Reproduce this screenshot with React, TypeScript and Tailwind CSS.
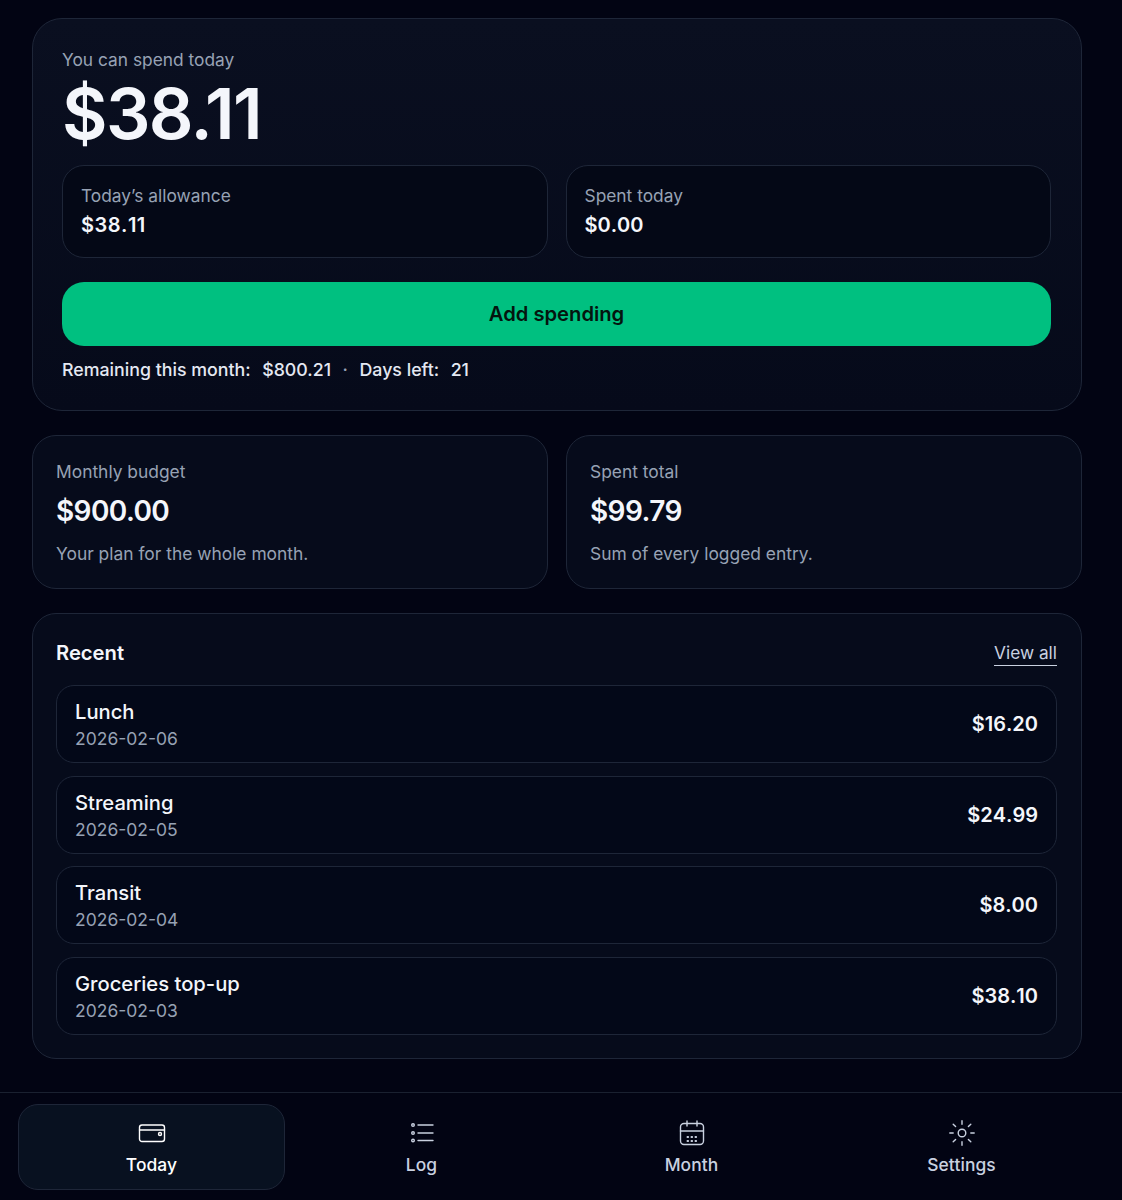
const FONT = "font-['Inter','Liberation_Sans',sans-serif]";

const RECENT = [
  { name: 'Lunch', date: '2026-02-06', amount: '$16.20' },
  { name: 'Streaming', date: '2026-02-05', amount: '$24.99' },
  { name: 'Transit', date: '2026-02-04', amount: '$8.00' },
  { name: 'Groceries top-up', date: '2026-02-03', amount: '$38.10' },
];

function WalletIcon() {
  return (
    <svg width="28" height="28" viewBox="0 0 28 28" fill="none" stroke="currentColor" strokeWidth="1.4" strokeLinecap="round" strokeLinejoin="round">
      <rect x="1.5" y="6" width="25" height="16.5" rx="2.5" />
      <path d="M1.5 11h25" />
      <circle cx="22" cy="15" r="1.5" />
    </svg>
  );
}

function ListIcon() {
  return (
    <svg width="28" height="28" viewBox="0 0 28 28" fill="none" stroke="currentColor" strokeWidth="1.4" strokeLinecap="round">
      <path d="M10 6h15M10 14h15M10 21.5h15" />
      <circle cx="5" cy="6" r="1.3" />
      <circle cx="5" cy="14" r="1.3" />
      <circle cx="5" cy="21.5" r="1.3" />
    </svg>
  );
}

function CalendarIcon() {
  return (
    <svg width="28" height="28" viewBox="0 0 28 28" fill="none" stroke="currentColor" strokeWidth="1.4" strokeLinecap="round">
      <rect x="2.5" y="4.5" width="23" height="21" rx="3.5" />
      <path d="M2.5 12h23M9 2v5M19 2v5" />
      <path d="M9.5 18h.6M13.5 18h.6M17.5 18h.6M9.5 22h.6M13.5 22h.6M17.5 22h.6" strokeWidth="2" />
    </svg>
  );
}

function SunIcon() {
  return (
    <svg width="28" height="28" viewBox="0 0 28 28" fill="none" stroke="currentColor" strokeWidth="1.4" strokeLinecap="round">
      <circle cx="14" cy="14" r="3.8" />
      <path d="M14 1.8v3.4M14 22.8v3.4M1.8 14h3.4M22.8 14h3.4M5.2 5.2l2.4 2.4M20.4 20.4l2.4 2.4M5.2 22.8l2.4-2.4M20.4 7.6l2.4-2.4" />
    </svg>
  );
}

function NavItem({ label, icon, active }: { label: string; icon: React.ReactNode; active?: boolean }) {
  return (
    <div
      className={`flex h-[86px] flex-col items-center justify-center gap-[6px] rounded-[20px] border pt-[2px] text-[17.4px] font-medium tracking-[0.1px] ${
        active ? 'border-[#1e2638] bg-[#081120] text-white' : 'border-transparent text-[#c9d1e0]'
      }`}
    >
      {icon}
      <span className="leading-[24px]">{label}</span>
    </div>
  );
}

export default function App() {
  return (
    <div className={`${FONT} flex h-[1200px] flex-col overflow-hidden bg-[#020413] text-white`}>
      <main className="flex flex-col gap-[24px] pl-[32px] pr-[40px] pt-[18px]">
        {/* Hero */}
        <section className="h-[393px] rounded-[30px] border border-[#1e2638] bg-gradient-to-b from-[#0a0f20] to-[#060a1a] pl-[29px] pr-[30px] pt-[28px]">
          <div className="text-[17.35px] leading-[26px] text-[#97a2b4]">You can spend today</div>
          <div className="mt-[3px] text-[70px] font-semibold leading-[76px] tracking-[-1.6px] text-[#f4f6fb]">$38.11</div>
          <div className="mt-[13px] grid grid-cols-2 gap-[18px]">
            <div className="h-[93px] rounded-[22px] border border-[#1e2638] bg-[#040816] px-[18px] pt-[17px]">
              <div className="text-[17.35px] leading-[26px] text-[#97a2b4]">Today’s allowance</div>
              <div className="mt-[2px] text-[20px] font-semibold leading-[28px] tracking-[0.5px] text-[#f4f6fb] [font-kerning:none]">$38.11</div>
            </div>
            <div className="h-[93px] rounded-[22px] border border-[#1e2638] bg-[#040816] px-[18px] pt-[17px]">
              <div className="text-[17.35px] leading-[26px] text-[#97a2b4]">Spent today</div>
              <div className="mt-[2px] text-[20px] font-semibold leading-[28px] text-[#f4f6fb] [font-kerning:none]">$0.00</div>
            </div>
          </div>
          <div className="mt-[24px] flex h-[64px] items-center justify-center rounded-[22px] bg-[#00c080] text-[20.2px] font-semibold text-[#04150f]">
            Add spending
          </div>
          <div className="mt-[11px] flex items-center text-[17.8px] font-medium leading-[26px] text-[#e4e8f2]">
            <span>Remaining this month:</span>
            <span className="ml-[11.5px]">$800.21</span>
            <span className="ml-[11.5px] text-[#97a2b4]">·</span>
            <span className="ml-[11.5px]">Days left:</span>
            <span className="ml-[11.5px]">21</span>
          </div>
        </section>

        {/* Totals */}
        <section className="grid grid-cols-2 gap-[18px]">
          <div className="h-[154px] rounded-[24px] border border-[#1e2638] bg-[#060b1b] px-[23px] pt-[23px]">
            <div className="text-[17.4px] leading-[26px] text-[#97a2b4]">Monthly budget</div>
            <div className="mt-[7px] text-[28px] font-semibold leading-[38px] tracking-[-0.6px] text-[#f4f6fb]">$900.00</div>
            <div className="mt-[11px] text-[17.4px] leading-[26px] text-[#97a2b4]">Your plan for the whole month.</div>
          </div>
          <div className="h-[154px] rounded-[24px] border border-[#1e2638] bg-[#060b1b] px-[23px] pt-[23px]">
            <div className="text-[17.4px] leading-[26px] text-[#97a2b4]">Spent total</div>
            <div className="mt-[7px] text-[28px] font-semibold leading-[38px] tracking-[-0.6px] text-[#f4f6fb]">$99.79</div>
            <div className="mt-[11px] text-[17.4px] leading-[26px] text-[#97a2b4]">Sum of every logged entry.</div>
          </div>
        </section>

        {/* Recent */}
        <section className="h-[446px] rounded-[24px] border border-[#1e2638] bg-[#060b1b] pl-[23px] pr-[24px] pt-[24px]">
          <div className="flex h-[30px] items-center justify-between">
            <span className="text-[20.2px] font-semibold text-[#f4f6fb]">Recent</span>
            <span className="border-b border-[#c9d1e0] text-[17.3px] leading-[25px] text-[#c9d1e0]">View all</span>
          </div>
          <div className="mt-[17px] flex flex-col gap-[12.5px]">
            {RECENT.map(r => (
              <div key={r.name} className="flex h-[78px] items-center justify-between rounded-[18px] border border-[#1e2638] bg-[#030818] px-[18px]">
                <div className="pt-[1px]">
                  <div className="text-[20.2px] font-medium leading-[28px] text-[#f4f6fb]">{r.name}</div>
                  <div className="mt-[1px] text-[17.5px] leading-[24px] text-[#97a2b4]">{r.date}</div>
                </div>
                <div className="text-[20px] font-semibold text-[#f4f6fb] [font-kerning:none]">{r.amount}</div>
              </div>
            ))}
          </div>
        </section>
      </main>

      {/* Bottom nav */}
      <nav className="mt-[33px] grid flex-1 grid-cols-4 gap-[3px] border-t border-[#1a2130] pl-[18px] pr-[27px] pt-[11px]">
        <NavItem label="Today" icon={<WalletIcon />} active />
        <NavItem label="Log" icon={<ListIcon />} />
        <NavItem label="Month" icon={<CalendarIcon />} />
        <NavItem label="Settings" icon={<SunIcon />} />
      </nav>
    </div>
  );
}
